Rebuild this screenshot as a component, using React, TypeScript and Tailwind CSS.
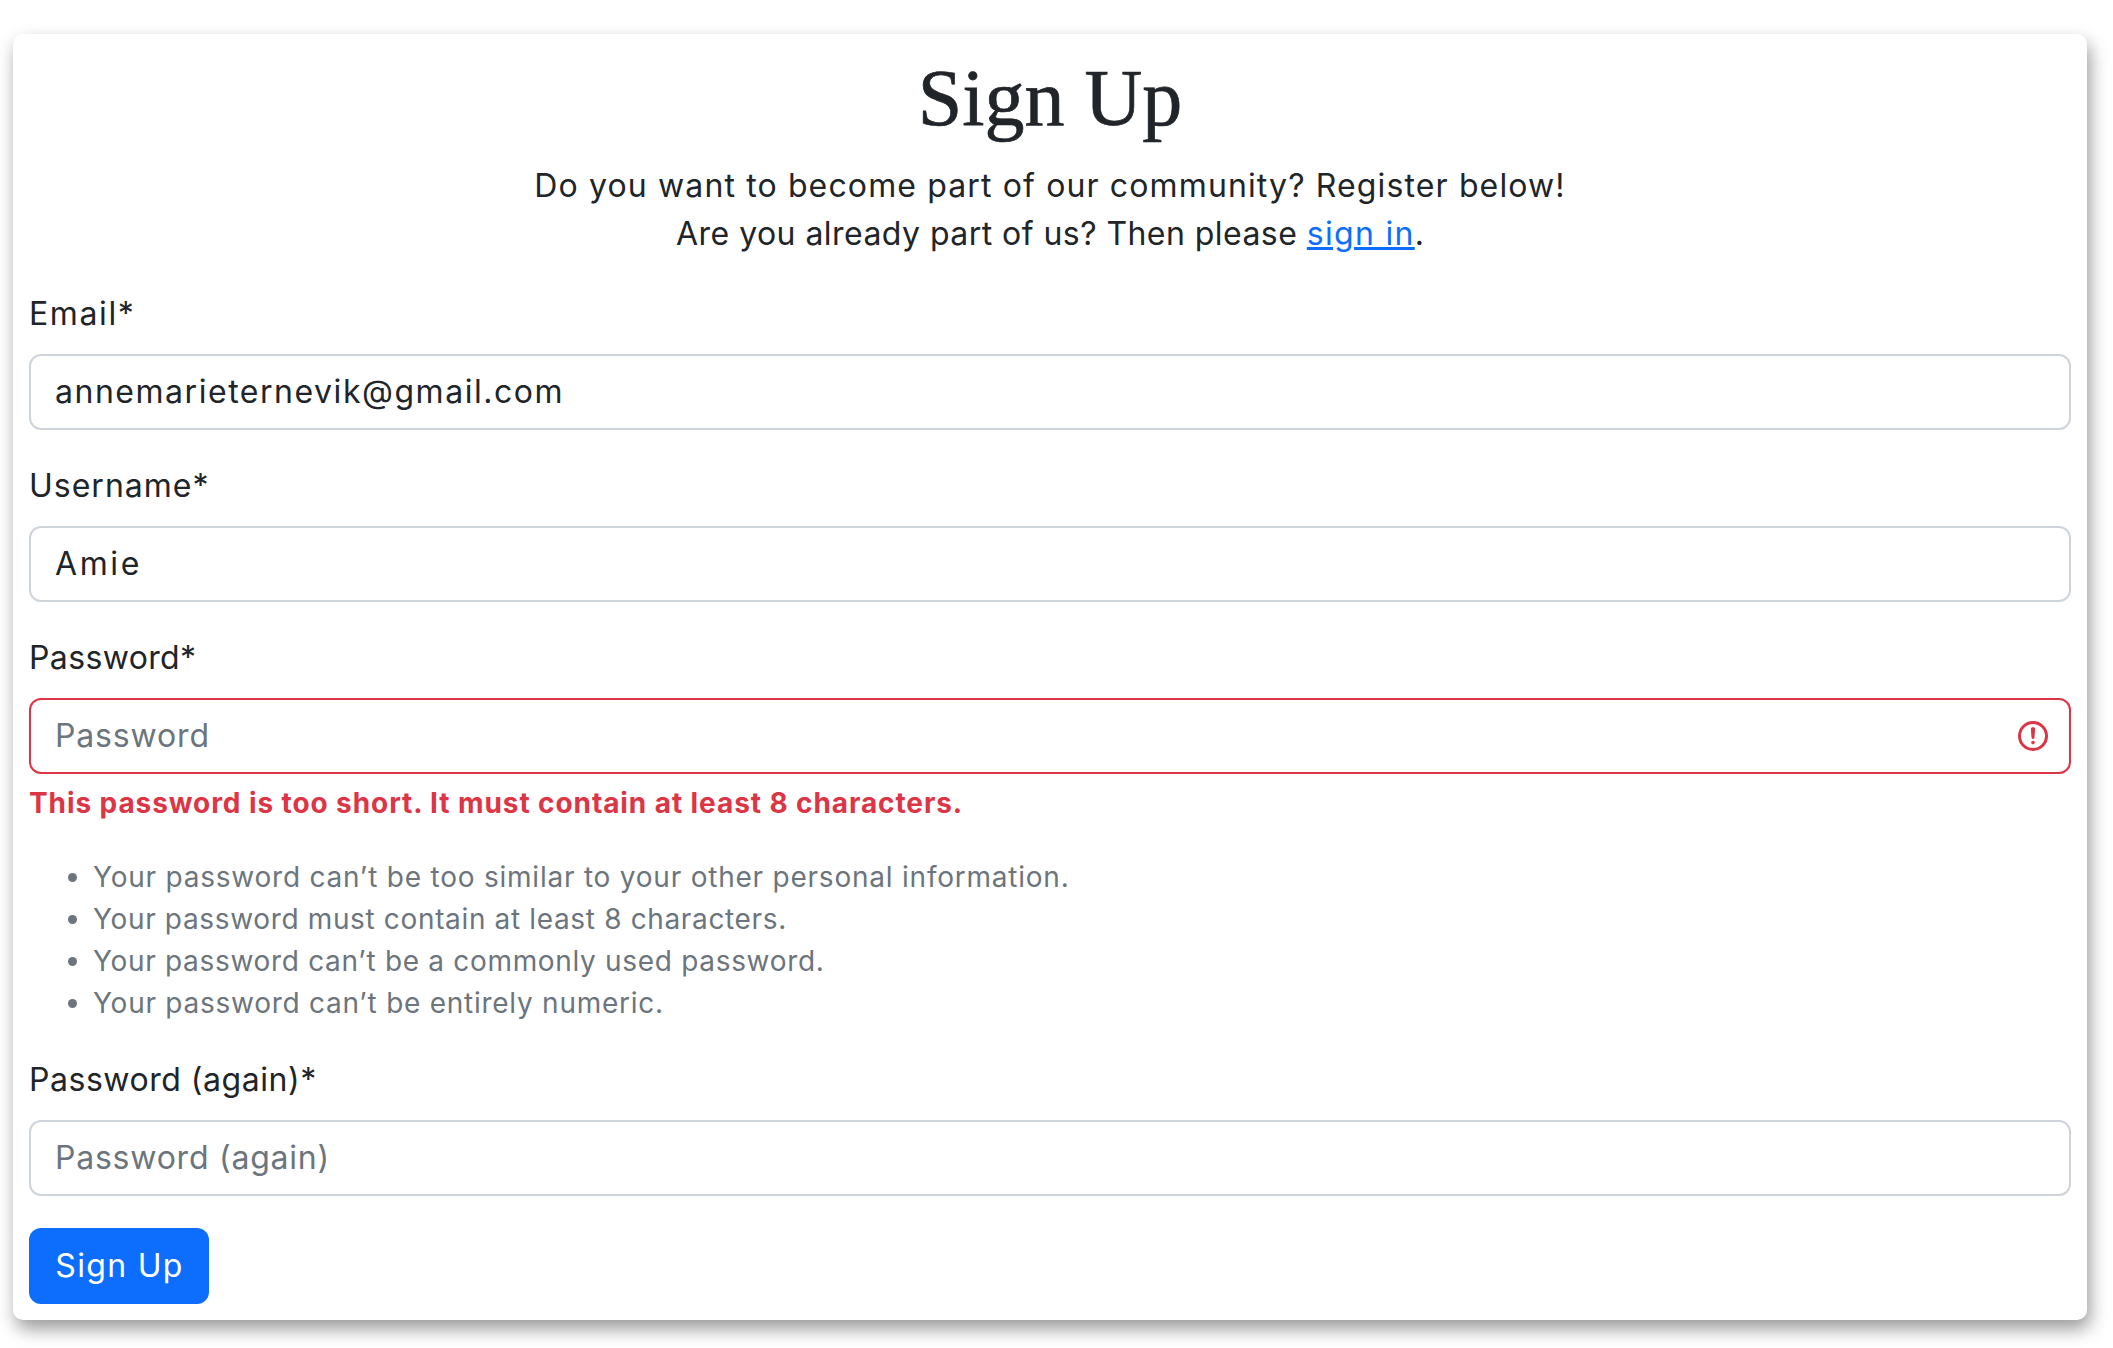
type FieldProps = {
  id: string;
  label: string;
  labelClass: string;
  inputClass: string;
  value?: string;
  placeholder?: string;
  invalid?: boolean;
};

function Field({ id, label, labelClass, inputClass, value, placeholder, invalid }: FieldProps) {
  return (
    <div className="flex flex-col gap-4">
      <label htmlFor={id} className={`block h-12 leading-[48px] ${labelClass}`}>
        {label}
      </label>
      <div
        className={`flex h-[76px] items-center rounded-[12px] border-2 bg-white pr-[18px] pl-6 ${
          invalid ? "border-[#dc3545]" : "border-[#ced4da]"
        }`}
      >
        <input
          id={id}
          type="text"
          defaultValue={value}
          placeholder={placeholder}
          className={`h-12 min-w-0 flex-1 bg-transparent leading-[48px] outline-none placeholder:text-[#6c757d] placeholder:opacity-100 ${inputClass}`}
        />
        {invalid && (
          <svg viewBox="0 0 12 12" className="size-9 shrink-0" fill="none" stroke="#dc3545">
            <circle cx="6" cy="6" r="4.5" />
            <path strokeLinejoin="round" d="M5.8 3.6h.4L6 6.5z" />
            <circle cx="6" cy="8.2" r=".6" fill="#dc3545" stroke="none" />
          </svg>
        )}
      </div>
    </div>
  );
}

const rules = [
  { text: "Your password can’t be too similar to your other personal information.", tracking: "tracking-[0.775px]" },
  { text: "Your password must contain at least 8 characters.", tracking: "tracking-[0.65px]" },
  { text: "Your password can’t be a commonly used password.", tracking: "tracking-[0.68px]" },
  { text: "Your password can’t be entirely numeric.", tracking: "tracking-[0.74px]" },
];

export default function App() {
  return (
    <main className="h-[1348px] overflow-hidden bg-white pt-[34px] pl-[13px] font-['Inter',sans-serif] text-[32px] text-[#212529]">
      <section className="h-[1286px] w-[2074px] rounded-[10px] bg-white px-4 pt-4 shadow-[3px_9px_18px_rgba(0,0,0,0.4)]">
        <h1 className="text-center font-['Liberation_Serif',serif] text-[80px] leading-[96px] font-normal [-webkit-text-stroke:0.7px_#212529]">
          Sign Up
        </h1>
        <p className="mt-4 text-center leading-[48px]">
          <span className="tracking-[1.13px]">
            Do you want to become part of our community? Register below!
          </span>
          <br />
          <span className="tracking-[0.45px]">Are you already part of us? Then please </span>
          <a
            href="#signin"
            className="tracking-[1.3px] text-[#0d6efd] underline decoration-[3px] underline-offset-[2px]"
          >
            sign in
          </a>
          .
        </p>

        <form className="mt-8 flex flex-col items-stretch gap-8">
          <Field
            id="email"
            label="Email*"
            labelClass="tracking-[1.6px]"
            value="annemarieternevik@gmail.com"
            inputClass="tracking-[1.53px]"
          />
          <Field
            id="username"
            label="Username*"
            labelClass="tracking-[1px]"
            value="Amie"
            inputClass="tracking-[2.6px]"
          />
          <div>
            <Field
              id="password"
              label="Password*"
              labelClass="tracking-[0.37px]"
              placeholder="Password"
              inputClass="tracking-[0.85px]"
              invalid
            />
            <p className="mt-2 text-[28px] leading-[42px] font-bold tracking-[0.91px] text-[#dc3545]">
              This password is too short. It must contain at least 8 characters.
            </p>
            <ul className="mt-8 pl-[39px] text-[28px] leading-[42px] text-[#6c757d]">
              {rules.map((rule) => (
                <li key={rule.text} className="flex items-center gap-4">
                  <span className="size-[9px] shrink-0 rounded-full bg-[#6c757d]" />
                  <span className={rule.tracking}>{rule.text}</span>
                </li>
              ))}
            </ul>
          </div>
          <Field
            id="password-again"
            label="Password (again)*"
            labelClass="tracking-[0.53px]"
            placeholder="Password (again)"
            inputClass="tracking-[0.77px]"
          />
          <button
            type="button"
            className="h-[76px] w-[180px] rounded-[12px] bg-[#0d6efd] pl-[1px] leading-[48px] tracking-[1.3px] text-white"
          >
            Sign Up
          </button>
        </form>
      </section>
    </main>
  );
}
